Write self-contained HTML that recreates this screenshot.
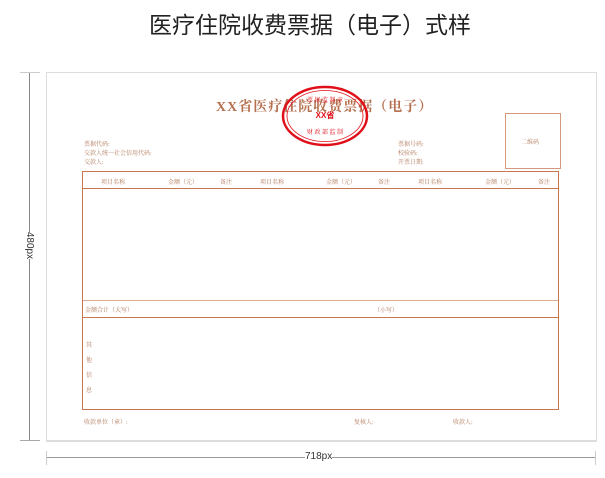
<!DOCTYPE html>
<html><head><meta charset="utf-8"><style>
body{margin:0;width:605px;height:478px;background:#fff;position:relative;overflow:hidden;font-family:"Liberation Serif","Noto Serif CJK SC",serif;}
.a{position:absolute;white-space:nowrap}
.s{font-size:6px;color:#b0785a}
.l{position:absolute;background:#c8764e}
</style></head><body>
<div class="a" style="left:0;width:620px;top:6px;text-align:center;font-family:'Liberation Sans','Noto Sans CJK SC',sans-serif;font-size:23px;color:#222">医疗住院收费票据（电子）式样</div>
<div class="a" style="left:46px;top:72px;width:549px;height:367px;border:1px solid #ddd;border-bottom:2px solid #ddd"></div>
<!-- dims -->
<div class="a" style="left:29px;top:72px;width:1px;height:368px;background:#888"></div>
<div class="a" style="left:20px;top:72px;width:20px;height:1px;background:#ccc"></div>
<div class="a" style="left:20px;top:440px;width:20px;height:1px;background:#aaa"></div>
<div class="a" style="left:16px;top:240px;transform:rotate(90deg);font-family:'Liberation Sans',sans-serif;font-size:10px;color:#333;background:#fff">480px</div>
<div class="a" style="left:46px;top:457px;width:550px;height:1px;background:#999"></div>
<div class="a" style="left:46px;top:451px;width:1px;height:14px;background:#ccc"></div>
<div class="a" style="left:595px;top:451px;width:1px;height:14px;background:#ccc"></div>
<div class="a" style="left:305px;top:451px;font-family:'Liberation Sans',sans-serif;font-size:10px;color:#333;background:#fff">718px</div>
<!-- title -->
<div class="a" style="left:216px;top:96px;font-size:14px;font-weight:bold;color:#b5704f;letter-spacing:1px">XX省医疗住院收费票据（电子）</div>
<svg class="a" style="left:280px;top:84px" width="90" height="64"><ellipse cx="45" cy="32" rx="42" ry="29" fill="none" stroke="#e0101a" stroke-width="2.5"/><ellipse cx="45" cy="32" rx="38" ry="25.5" fill="none" stroke="#e0101a" stroke-width="0.8"/><text x="45" y="34" font-size="8" fill="#e0101a" text-anchor="middle" font-weight="bold" font-family="Liberation Sans">XX省</text><text x="45" y="50" font-size="6" fill="#e0101a" text-anchor="middle">财 政 部 监 制</text><text x="45" y="18" font-size="6" fill="#e0101a" text-anchor="middle">票 据 监 制 章</text></svg>
<div class="a" style="left:505px;top:113px;width:54px;height:54px;border:1px solid #d49a80"></div>
<div class="a s" style="left:521px;top:137px">二维码</div>
<div class="a s" style="left:84px;top:141px;line-height:9px">票据代码:<br>交款人统一社会信用代码:<br>交款人:</div>
<div class="a s" style="left:398px;top:141px;line-height:9px">票据号码:<br>校验码:<br>开票日期:</div>
<!-- table -->
<div class="a" style="left:82px;top:171px;width:475px;height:237px;border:1.5px solid #c8764e"></div>
<div class="l" style="left:82px;top:188px;width:477px;height:1px"></div>
<div class="l" style="left:82px;top:300px;width:477px;height:1px;opacity:.6"></div>
<div class="l" style="left:82px;top:317px;width:477px;height:1px"></div>
<div class="a s" style="left:101px;top:177px">项目名称</div>
<div class="a s" style="left:168px;top:177px">金额（元）</div>
<div class="a s" style="left:220px;top:177px">备注</div>
<div class="a s" style="left:260px;top:177px">项目名称</div>
<div class="a s" style="left:326px;top:177px">金额（元）</div>
<div class="a s" style="left:378px;top:177px">备注</div>
<div class="a s" style="left:418px;top:177px">项目名称</div>
<div class="a s" style="left:485px;top:177px">金额（元）</div>
<div class="a s" style="left:538px;top:177px">备注</div>
<div class="a s" style="left:85px;top:305px">金额合计（大写）</div>
<div class="a s" style="left:374px;top:305px">（小写）</div>
<div class="a s" style="left:86px;top:339px;line-height:15px">其<br>他<br>信<br>息</div>
<div class="a s" style="left:84px;top:417px">收款单位（章）:</div>
<div class="a s" style="left:354px;top:417px">复核人:</div>
<div class="a s" style="left:453px;top:417px">收款人:</div>
</body></html>
